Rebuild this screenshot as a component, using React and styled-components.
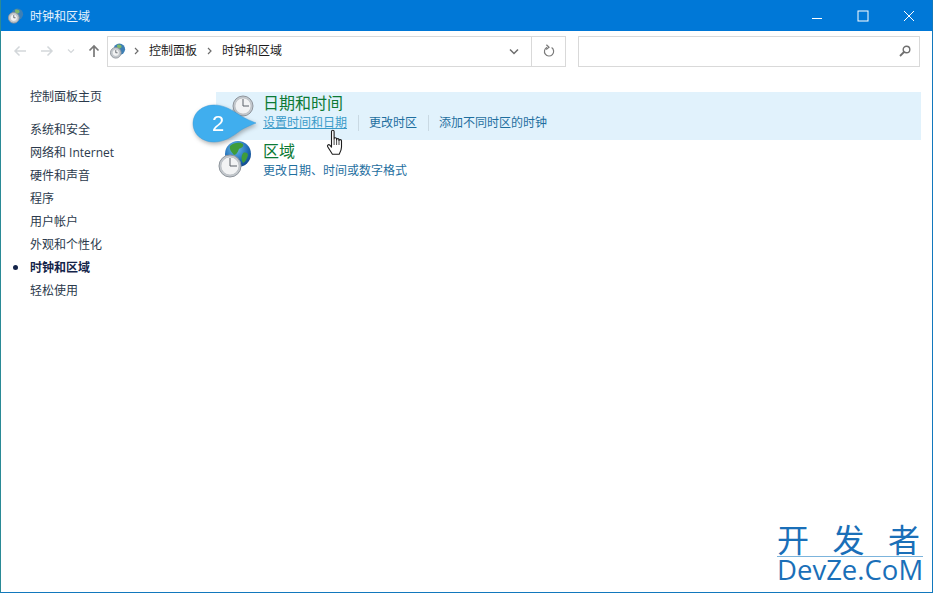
import React from 'react';
import styled, { createGlobalStyle } from 'styled-components';

const sidebarItems = ['系统和安全', '网络和 Internet', '硬件和声音', '程序', '用户帐户', '外观和个性化', '时钟和区域', '轻松使用'];

const ClockFace = ({ x, y, r }) => (
    <g>
        <circle cx={x} cy={y} r={r} fill='#c4c9ce' stroke='#8f959c' strokeWidth='1' />
        <circle cx={x} cy={y} r={r - 2} fill='#f2f3f4' stroke='#b0b5bb' strokeWidth='0.6' />
        <path d={`M${x} ${y - r + 3}V${y}H${x + r - 4}`} fill='none' stroke='#5b6168' strokeWidth='1' />
    </g>
);

const TitleIcon = () => (
    <svg width='16' height='16' viewBox='0 0 18 18'>
        <circle cx='10.5' cy='7' r='6.5' fill='#3d7fb5' />
        <path d='M8 2c2-1 5 0 5 2s-3 3-5 2z' fill='#7fb86a' />
        <ClockFace x={6.5} y={11} r={6} />
    </svg>
);

const GlobeIcon = () => (
    <svg width='47' height='40' viewBox='0 0 47 40'>
        <defs>
            <radialGradient id='sea' cx='0.4' cy='0.3' r='0.8'>
                <stop offset='0' stopColor='#6fc0ee' />
                <stop offset='0.6' stopColor='#1f6db8' />
                <stop offset='1' stopColor='#0d3f80' />
            </radialGradient>
        </defs>
        <circle cx='22' cy='13' r='13' fill='url(#sea)' />
        <path d='M14 5c4-4 10-4 13-2 1 3-2 4-4 5-1 3-3 6-5 6-2-3-5-5-4-9zM27 12c3-1 5 0 5 2-1 4-3 7-5 8-2-3-2-7 0-10z' fill='#3f9c3a' />
        <ClockFace x={14} y={25} r={11} />
    </svg>
);

const ClockIcon = () => (
    <svg width='47' height='40' viewBox='0 0 47 40'>
        <path d='M19 13l-2 5 5-1 6 4' fill='none' stroke='#c3c8cd' strokeWidth='2' />
        <ClockFace x={27} y={13} r={10} />
    </svg>
);

const HandCursor = () => (
    <svg width='18' height='27' viewBox='0 0 18 27'>
        <path
            d='M5.500 2.500c0-1.600 2.600-1.600 2.600 0v7.300c0-1.500 2.500-1.500 2.500 0v.9c0-1.400 2.400-1.400 2.400.1v.7c0-1.300 2.500-1.200 2.500.3v6.200c0 3.400-1.800 6.300-2.300 7.200H6.400c-1.300-2-3-4.700-4.700-7.400-.9-1.500.9-2.900 2.100-1.600l1.700 1.900z'
            fill='#fff'
            stroke='#1c1c1c'
            strokeWidth='1.1'
            strokeLinejoin='round'
        />
        <path d='M8.100 10v6M10.600 10.600v5.400M13 11.400V16' stroke='#1c1c1c' strokeWidth='0.8' fill='none' />
    </svg>
);

const App = () => {
    return (
        <Window>
            <GlobalStyle />
            <TitleBar>
                <TitleIcon />
                <TitleText>时钟和区域</TitleText>
                <WindowButtons>
                    <WindowButton>
                        <svg width='12' height='12' viewBox='0 0 12 12'>
                            <path d='M1 8.500h10' stroke='#fff' strokeWidth='1' />
                        </svg>
                    </WindowButton>
                    <WindowButton>
                        <svg width='12' height='12' viewBox='0 0 12 12'>
                            <rect x='1' y='1' width='10' height='10' fill='none' stroke='#fff' strokeWidth='1' />
                        </svg>
                    </WindowButton>
                    <WindowButton>
                        <svg width='12' height='12' viewBox='0 0 12 12'>
                            <path d='M1 1l10 10M11 1L1 11' stroke='#fff' strokeWidth='1' />
                        </svg>
                    </WindowButton>
                </WindowButtons>
            </TitleBar>

            <Toolbar>
                <NavButtons>
                    <NavButton $width={14}>
                        <svg width='14' height='12' viewBox='0 0 14 12'>
                            <path d='M13 6H2M6.500 1.500L2 6l4.500 4.500' fill='none' stroke='#d3d7da' strokeWidth='1.5' />
                        </svg>
                    </NavButton>
                    <NavButton $width={14}>
                        <svg width='14' height='12' viewBox='0 0 14 12'>
                            <path d='M1 6h11M7.500 1.500L12 6l-4.500 4.500' fill='none' stroke='#d3d7da' strokeWidth='1.5' />
                        </svg>
                    </NavButton>
                    <NavButton $width={8}>
                        <svg width='8' height='6' viewBox='0 0 8 6'>
                            <path d='M1 1.500l3 3 3-3' fill='none' stroke='#d3d7da' strokeWidth='1.2' />
                        </svg>
                    </NavButton>
                    <NavButton $width={12}>
                        <svg width='12' height='14' viewBox='0 0 12 14'>
                            <path d='M6 13V2M1.500 6.500L6 2l4.500 4.500' fill='none' stroke='#787878' strokeWidth='1.7' />
                        </svg>
                    </NavButton>
                </NavButtons>
                <AddressBox>
                    <Crumbs>
                        <TitleIcon />
                        <CrumbArrow>
                            <svg width='5' height='8' viewBox='0 0 5 8'>
                                <path d='M1 1l3 3-3 3' fill='none' stroke='#6d6d6d' strokeWidth='1.2' />
                            </svg>
                        </CrumbArrow>
                        <Crumb>控制面板</Crumb>
                        <CrumbArrow>
                            <svg width='5' height='8' viewBox='0 0 5 8'>
                                <path d='M1 1l3 3-3 3' fill='none' stroke='#6d6d6d' strokeWidth='1.2' />
                            </svg>
                        </CrumbArrow>
                        <Crumb>时钟和区域</Crumb>
                    </Crumbs>
                    <DropButton>
                        <svg width='10' height='7' viewBox='0 0 10 7'>
                            <path d='M1 1.500l4 4 4-4' fill='none' stroke='#6d6d6d' strokeWidth='1.5' />
                        </svg>
                    </DropButton>
                    <RefreshButton>
                        <svg width='12' height='14' viewBox='0 0 12 14'>
                            <path d='M4 3.300a4.600 4.600 0 1 0 4.600.3M3.400 .8L6 3.300 3.200 5.400' fill='none' stroke='#7a7a7a' strokeWidth='1.2' />
                        </svg>
                    </RefreshButton>
                </AddressBox>
                <SearchBox>
                    <svg width='12' height='12' viewBox='0 0 12 12'>
                        <circle cx='7.500' cy='4.500' r='3.300' fill='none' stroke='#6f6f6f' strokeWidth='1.4' />
                        <path d='M5 7L1 11' stroke='#6f6f6f' strokeWidth='1.8' />
                    </svg>
                </SearchBox>
            </Toolbar>

            <Body>
                <Sidebar>
                    <SideHome>控制面板主页</SideHome>
                    {sidebarItems.map(item => (
                        <SideItem key={item} $active={item === '时钟和区域'}>
                            {item}
                        </SideItem>
                    ))}
                </Sidebar>
                <Main>
                    <Category $hover>
                        <CategoryIcon>
                            <ClockIcon />
                        </CategoryIcon>
                        <div>
                            <CategoryTitle>日期和时间</CategoryTitle>
                            <Links>
                                <TaskLink $under>设置时间和日期</TaskLink>
                                <TaskLink $sep>更改时区</TaskLink>
                                <TaskLink $sep>添加不同时区的时钟</TaskLink>
                            </Links>
                        </div>
                        <Callout>
                            <svg width='66' height='40' viewBox='0 0 66 40'>
                                <path d='M22 1c10 0 18 5 27 11 5 3 10 5 15 7-5 2-10 4-15 7-9 7-17 12-27 12C10 38 1 30 1 19.500S10 1 22 1z' fill='#40aeee' stroke='#3a9ad8' strokeWidth='0.5' />
                            </svg>
                            <CalloutNumber>2</CalloutNumber>
                        </Callout>
                        <Pointer>
                            <HandCursor />
                        </Pointer>
                    </Category>
                    <Category>
                        <CategoryIcon>
                            <GlobeIcon />
                        </CategoryIcon>
                        <div>
                            <CategoryTitle>区域</CategoryTitle>
                            <Links>
                                <TaskLink>更改日期、时间或数字格式</TaskLink>
                            </Links>
                        </div>
                    </Category>
                </Main>
            </Body>

            <Watermark>
                <WatermarkCn>
                    <span>开</span>
                    <span>发</span>
                    <span>者</span>
                </WatermarkCn>
                <WatermarkEn>DevZe.CoM</WatermarkEn>
            </Watermark>
        </Window>
    );
};

export default App;

const GlobalStyle = createGlobalStyle`
    html, body {
        margin: 0;
        padding: 0;
        background: #fff;
    }
    * {
        box-sizing: border-box;
    }
`;

const Window = styled.div`
    position: relative;
    width: 933px;
    height: 593px;
    display: flex;
    flex-direction: column;
    overflow: hidden;
    background: #fff;
    border: 1px solid #1278bd;
    border-left-color: #2a8a96;
    border-top: 0;
    font-family: 'Open Sans', 'Noto Sans CJK SC', sans-serif;
    font-size: 12px;
`;

const TitleBar = styled.div`
    height: 31px;
    flex: none;
    display: flex;
    align-items: center;
    padding-left: 7px;
    background: #0078d7;
    color: #e8f3fc;
`;

const TitleText = styled.span`
    margin-left: 6px;
`;

const WindowButtons = styled.div`
    display: flex;
    margin-left: auto;
`;

const WindowButton = styled.div`
    width: 46px;
    height: 30px;
    display: flex;
    align-items: center;
    justify-content: center;
`;

const Toolbar = styled.div`
    height: 44px;
    flex: none;
    display: flex;
    align-items: center;
    padding: 0 0 4px 12px;
`;

const NavButtons = styled.div`
    width: 94px;
    display: flex;
    align-items: center;
    gap: 8px;
`;

const NavButton = styled.div`
    width: ${props => props.$width}px;
    display: flex;
    justify-content: center;
    margin-right: 5px;
`;

const AddressBox = styled.div`
    width: 459px;
    height: 31px;
    display: flex;
    align-items: center;
    border: 1px solid #d9d9d9;
`;

const Crumbs = styled.div`
    flex: 1;
    display: flex;
    align-items: center;
    padding-left: 2px;
    color: #1c1c1c;
`;

const CrumbArrow = styled.span`
    display: flex;
    margin: 0 10px 0 8px;
`;

const Crumb = styled.span`
    line-height: 16px;
    margin-right: 2px;
`;

const DropButton = styled.div`
    width: 34px;
    display: flex;
    justify-content: center;
`;

const RefreshButton = styled.div`
    width: 34px;
    height: 100%;
    display: flex;
    align-items: center;
    justify-content: center;
    border-left: 1px solid #d9d9d9;
`;

const SearchBox = styled.div`
    width: 342px;
    height: 31px;
    margin-left: 12px;
    display: flex;
    align-items: center;
    justify-content: flex-end;
    padding-right: 8px;
    border: 1px solid #d9d9d9;
`;

const Body = styled.div`
    flex: 1;
    display: flex;
`;

const Sidebar = styled.div`
    width: 215px;
    flex: none;
    padding: 10px 0 0 29px;
`;

const SideHome = styled.div`
    line-height: 23px;
    height: 33px;
    color: #2b3a4c;
`;

const SideItem = styled.div`
    position: relative;
    line-height: 23px;
    color: ${props => (props.$active ? '#14244a' : '#2b3a4c')};
    font-weight: ${props => (props.$active ? 700 : 400)};

    &::before {
        content: '';
        display: ${props => (props.$active ? 'block' : 'none')};
        position: absolute;
        left: -17px;
        top: 9px;
        width: 5px;
        height: 5px;
        border-radius: 50%;
        background: #14244a;
    }
`;

const Main = styled.div`
    flex: 1;
    padding: 17px 11px 0 0;
`;

const Category = styled.div`
    position: relative;
    height: 48px;
    display: flex;
    background: ${props => (props.$hover ? '#e1f2fc' : 'transparent')};
`;

const CategoryIcon = styled.div`
    width: 47px;
    flex: none;
    padding-top: 1px;
`;

const CategoryTitle = styled.div`
    font-size: 16px;
    line-height: 22px;
    color: #0c7a35;
`;

const Links = styled.div`
    display: flex;
    align-items: center;
    margin-top: 1px;
`;

const TaskLink = styled.span`
    line-height: 16px;
    color: ${props => (props.$under ? '#3a9bc9' : '#1f6f9f')};
    text-decoration: ${props => (props.$under ? 'underline' : 'none')};
    ${props =>
        props.$sep &&
        `
        margin-left: 11px;
        padding-left: 10px;
        border-left: 1px solid #c9d9e3;
    `}
`;

const Callout = styled.div`
    position: absolute;
    left: -24px;
    top: 12px;
    width: 66px;
    height: 40px;
    filter: drop-shadow(1px 2px 2px rgba(0, 0, 0, 0.3));
`;

const CalloutNumber = styled.span`
    position: absolute;
    left: 20px;
    top: 6px;
    font-family: 'Liberation Sans', sans-serif;
    font-size: 22px;
    line-height: 28px;
    color: #fff;
`;

const Pointer = styled.div`
    position: absolute;
    left: 110px;
    top: 37px;
    display: flex;
`;

const Watermark = styled.div`
    position: absolute;
    right: 9px;
    bottom: 9px;
    width: 146px;
    color: #1a6fb8;
`;

const WatermarkCn = styled.div`
    display: flex;
    justify-content: space-between;
    padding: 0 3px 0 0;
    font-size: 32px;
    line-height: 32px;
    border-bottom: 1px solid #7cb4dc;
`;

const WatermarkEn = styled.div`
    font-family: 'Open Sans', sans-serif;
    font-size: 27.5px;
    line-height: 26px;
    white-space: nowrap;
`;
